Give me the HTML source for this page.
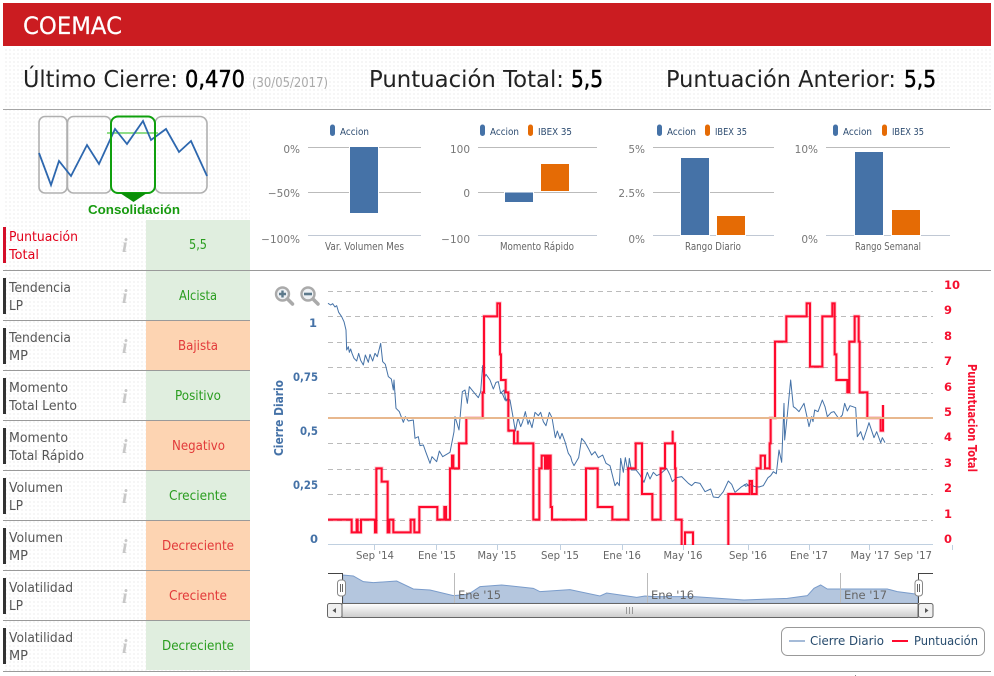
<!DOCTYPE html>
<html lang="es">
<head>
<meta charset="utf-8">
<title>COEMAC</title>
<style>
html,body{margin:0;padding:0;background:#fff;width:994px;height:676px;overflow:hidden}
svg{display:block}
text{font-family:"DejaVu Sans","Liberation Sans",sans-serif}
.h{font-size:23px;fill:#222}
.hb{font-size:23px;fill:#000;stroke:#000;stroke-width:.5px}
.l{font-size:13px;fill:#555}
.r{font-size:13px;fill:#e2001a}
.g{font-size:13px;fill:#2a9d1f}
.o{font-size:13px;fill:#e23a3a}
.i{font-family:"Liberation Serif",serif;font-style:italic;font-weight:bold;font-size:20px;fill:#c8c8c8}
.t{font-size:10.5px;fill:#666}
.y{font-size:10.5px;fill:#777;text-anchor:end}
.lg{font-size:9.5px;fill:#2b4a6f}
.ax{font-size:11px;fill:#666;text-anchor:middle}
.bl{font-size:11.5px;font-weight:bold;fill:#4572a7;text-anchor:end}
.br{font-size:11.5px;font-weight:bold;fill:#f5102f}
.nv{font-size:11.5px;fill:#666}
.lt{font-size:12px;fill:#274b6d}
</style>
</head>
<body>
<svg width="994" height="676" viewBox="0 0 994 676" xmlns="http://www.w3.org/2000/svg">
<defs>
<pattern id="d" width="4" height="4" patternUnits="userSpaceOnUse"><rect x="1" y="1" width="2" height="2" fill="#f6f6f6"/></pattern>
<clipPath id="pc"><rect x="328" y="280" width="610" height="265"/></clipPath>
<linearGradient id="sb" x1="0" y1="0" x2="0" y2="1"><stop offset="0" stop-color="#fff"/><stop offset="1" stop-color="#ccc"/></linearGradient>
<g id="red">
<path transform="translate(260,275) scale(.33333)" d="M204 734H275V772H290V734H293V772H303V734H345V772H349V580H365V620H383V772H388V734H400V772H452V734H463V772H478V696H532V734H553V696H558V734H570V580H576V542H580V580H597V505H619V429H668V352H672V124H712V85H720V238H723V315H737V352H745V467H750"/>
<path transform="translate(500,275) scale(.33333)" d="M25 467H42V505H53V467V505H100V734H118V580H125V542H135V580H140V542H145V580H150V542H152V696H156V734H258V580H293V696H337V734H385V580H407V505H426V657H457V734H482V580H495V505H518V467V505H525V580H527V734H545V820H555V772H579V820H685V657H732"/>
<path transform="translate(744,275) scale(.33333)" d="M0 657H17V618H24V657H38V580H50V542H63V580H77V505H80V429H93V200H127V124H188V85H198V275H235V124H265V85H272V124V238H277V315H310V352H316V200H332V124H344V200H347V352H370V429H410V467H417V390"/>
</g>
</defs>

<rect width="994" height="676" fill="#fff"/>
<rect x="3" y="47" width="988" height="62" fill="url(#d)"/>
<rect x="3" y="110" width="247" height="561" fill="url(#d)"/>

<!-- Header -->
<rect x="3" y="3" width="988" height="43" fill="#cb1c21"/>
<text x="23" y="34" font-size="24" fill="#fff" stroke="#fff" stroke-width=".2" textLength="99" lengthAdjust="spacingAndGlyphs">COEMAC</text>

<text class="h" x="23" y="87" textLength="155" lengthAdjust="spacingAndGlyphs">Último Cierre:</text>
<text class="hb" x="185" y="87" textLength="60" lengthAdjust="spacingAndGlyphs">0,470</text>
<text x="252" y="87" font-size="13" fill="#aaa" textLength="76" lengthAdjust="spacingAndGlyphs">(30/05/2017)</text>
<text class="h" x="369" y="87" textLength="195" lengthAdjust="spacingAndGlyphs">Puntuación Total:</text>
<text class="hb" x="571" y="87" textLength="32" lengthAdjust="spacingAndGlyphs">5,5</text>
<text class="h" x="666" y="87" textLength="230" lengthAdjust="spacingAndGlyphs">Puntuación Anterior:</text>
<text class="hb" x="904" y="87" textLength="32" lengthAdjust="spacingAndGlyphs">5,5</text>
<rect x="3" y="109" width="988" height="1" fill="#a5a5a5"/>

<!-- Pattern icon -->
<g fill="#fff" fill-opacity="0" stroke="#b0b0b0" stroke-width="1.600">
<rect x="39" y="116.500" width="28" height="76.500" rx="6"/>
<rect x="67.500" y="116.500" width="43.500" height="76.500" rx="6"/>
<rect x="155" y="116.500" width="52" height="76.500" rx="7"/>
</g>
<path d="M107 133H158" stroke="#8fdc87" stroke-width="2"/>
<polyline points="39,153 51,185 59,161 71,176 87,145 99,164 115,129 127,144 143,121 151,140 166,129 179,152 191,141 207,176" fill="none" stroke="#2d67ae" stroke-width="1.800"/>
<rect x="111" y="116.500" width="44" height="76.500" rx="7" fill="none" stroke="#10a00e" stroke-width="2"/>
<path d="M120 193H147L133.500 202Z" fill="#0a8f08"/>
<text x="88" y="214" font-weight="bold" font-size="13" fill="#179a0f" style="font-family:'Liberation Sans',sans-serif" textLength="92" lengthAdjust="spacingAndGlyphs">Consolidación</text>

<!-- Table -->
<rect x="146" y="220" width="104" height="50" fill="#e0eedf"/>
<rect x="146" y="271" width="104" height="49" fill="#e0eedf"/>
<rect x="146" y="321" width="104" height="49" fill="#fdd4b2"/>
<rect x="146" y="371" width="104" height="49" fill="#e0eedf"/>
<rect x="146" y="421" width="104" height="49" fill="#fdd4b2"/>
<rect x="146" y="471" width="104" height="49" fill="#e0eedf"/>
<rect x="146" y="521" width="104" height="49" fill="#fdd4b2"/>
<rect x="146" y="571" width="104" height="49" fill="#fdd4b2"/>
<rect x="146" y="621" width="104" height="49" fill="#e0eedf"/>

<g fill="#9a9a9a">
<rect x="3" y="270" width="988" height="1"/>
<rect x="3" y="320" width="247" height="1"/>
<rect x="3" y="370" width="247" height="1"/>
<rect x="3" y="420" width="247" height="1"/>
<rect x="3" y="470" width="247" height="1"/>
<rect x="3" y="520" width="247" height="1"/>
<rect x="3" y="570" width="247" height="1"/>
<rect x="3" y="620" width="247" height="1"/>
<rect x="3" y="671" width="988" height="1"/>
</g>
<rect x="855" y="675" width="1" height="1" fill="#888"/>

<rect x="3" y="227" width="3" height="36" fill="#d40f2a"/>
<g fill="#333">
<rect x="3" y="278" width="3" height="36"/>
<rect x="3" y="328" width="3" height="36"/>
<rect x="3" y="378" width="3" height="36"/>
<rect x="3" y="428" width="3" height="36"/>
<rect x="3" y="478" width="3" height="36"/>
<rect x="3" y="528" width="3" height="36"/>
<rect x="3" y="578" width="3" height="36"/>
<rect x="3" y="628" width="3" height="36"/>
</g>

<text class="r" x="9" y="241" textLength="69" lengthAdjust="spacingAndGlyphs">Puntuación</text>
<text class="r" x="9" y="259" textLength="30" lengthAdjust="spacingAndGlyphs">Total</text>
<text class="l" x="9" y="292" textLength="62" lengthAdjust="spacingAndGlyphs">Tendencia</text>
<text class="l" x="9" y="310" textLength="14" lengthAdjust="spacingAndGlyphs">LP</text>
<text class="l" x="9" y="342" textLength="62" lengthAdjust="spacingAndGlyphs">Tendencia</text>
<text class="l" x="9" y="360" textLength="19" lengthAdjust="spacingAndGlyphs">MP</text>
<text class="l" x="9" y="392" textLength="59" lengthAdjust="spacingAndGlyphs">Momento</text>
<text class="l" x="9" y="410" textLength="68" lengthAdjust="spacingAndGlyphs">Total Lento</text>
<text class="l" x="9" y="442" textLength="59" lengthAdjust="spacingAndGlyphs">Momento</text>
<text class="l" x="9" y="460" textLength="75" lengthAdjust="spacingAndGlyphs">Total Rápido</text>
<text class="l" x="9" y="492" textLength="54" lengthAdjust="spacingAndGlyphs">Volumen</text>
<text class="l" x="9" y="510" textLength="14" lengthAdjust="spacingAndGlyphs">LP</text>
<text class="l" x="9" y="542" textLength="54" lengthAdjust="spacingAndGlyphs">Volumen</text>
<text class="l" x="9" y="560" textLength="19" lengthAdjust="spacingAndGlyphs">MP</text>
<text class="l" x="9" y="592" textLength="64" lengthAdjust="spacingAndGlyphs">Volatilidad</text>
<text class="l" x="9" y="610" textLength="14" lengthAdjust="spacingAndGlyphs">LP</text>
<text class="l" x="9" y="642" textLength="64" lengthAdjust="spacingAndGlyphs">Volatilidad</text>
<text class="l" x="9" y="660" textLength="19" lengthAdjust="spacingAndGlyphs">MP</text>

<text class="i" x="122" y="252">i</text>
<text class="i" x="122" y="303">i</text>
<text class="i" x="122" y="353">i</text>
<text class="i" x="122" y="403">i</text>
<text class="i" x="122" y="453">i</text>
<text class="i" x="122" y="503">i</text>
<text class="i" x="122" y="553">i</text>
<text class="i" x="122" y="603">i</text>
<text class="i" x="122" y="653">i</text>

<text class="g" x="189" y="249" textLength="18" lengthAdjust="spacingAndGlyphs">5,5</text>
<text class="g" x="179" y="300" textLength="38" lengthAdjust="spacingAndGlyphs">Alcista</text>
<text class="o" x="178" y="350" textLength="40" lengthAdjust="spacingAndGlyphs">Bajista</text>
<text class="g" x="175" y="400" textLength="46" lengthAdjust="spacingAndGlyphs">Positivo</text>
<text class="o" x="172" y="450" textLength="53" lengthAdjust="spacingAndGlyphs">Negativo</text>
<text class="g" x="169" y="500" textLength="58" lengthAdjust="spacingAndGlyphs">Creciente</text>
<text class="o" x="162" y="550" textLength="72" lengthAdjust="spacingAndGlyphs">Decreciente</text>
<text class="o" x="169" y="600" textLength="58" lengthAdjust="spacingAndGlyphs">Creciente</text>
<text class="g" x="162" y="650" textLength="72" lengthAdjust="spacingAndGlyphs">Decreciente</text>

<!-- Small bar charts -->
<g stroke="#bbb" stroke-width="1">
<path d="M308 147.500H421M308 192.500H421"/>
<path d="M478 147.500H597M478 192.500H597"/>
<path d="M653 147.500H774M653 192.500H774"/>
<path d="M826 147.500H950"/>
</g>
<g stroke="#c0c8d4" stroke-width="1">
<path d="M308 235.500H421M478 235.500H597M653 235.500H774M826 235.500H950"/>
</g>
<g fill="#4572a7" stroke="#fff" stroke-width="1">
<rect x="349.500" y="146.500" width="29" height="67"/>
<rect x="504.500" y="192" width="29" height="10.500"/>
<rect x="680.500" y="157.500" width="29" height="78"/>
<rect x="854.500" y="151.500" width="29" height="84"/>
</g>
<g fill="#e56b05" stroke="#fff" stroke-width="1">
<rect x="540.500" y="163.500" width="29" height="28"/>
<rect x="716.500" y="215.500" width="29" height="20"/>
<rect x="891.500" y="209.500" width="29" height="26"/>
</g>

<g fill="#4572a7">
<rect x="330" y="124.500" width="5" height="11.500" rx="2.500"/>
<rect x="480" y="124.500" width="5" height="11.500" rx="2.500"/>
<rect x="657" y="124.500" width="5" height="11.500" rx="2.500"/>
<rect x="833" y="124.500" width="5" height="11.500" rx="2.500"/>
</g>
<g fill="#e56b05">
<rect x="528" y="124.500" width="5" height="11.500" rx="2.500"/>
<rect x="705" y="124.500" width="5" height="11.500" rx="2.500"/>
<rect x="882" y="124.500" width="5" height="11.500" rx="2.500"/>
</g>
<text class="lg" x="340" y="135" textLength="29" lengthAdjust="spacingAndGlyphs">Accion</text>
<text class="lg" x="490" y="135" textLength="29" lengthAdjust="spacingAndGlyphs">Accion</text>
<text class="lg" x="538" y="135" textLength="34" lengthAdjust="spacingAndGlyphs">IBEX 35</text>
<text class="lg" x="667" y="135" textLength="29" lengthAdjust="spacingAndGlyphs">Accion</text>
<text class="lg" x="715" y="135" textLength="32" lengthAdjust="spacingAndGlyphs">IBEX 35</text>
<text class="lg" x="843" y="135" textLength="29" lengthAdjust="spacingAndGlyphs">Accion</text>
<text class="lg" x="892" y="135" textLength="32" lengthAdjust="spacingAndGlyphs">IBEX 35</text>

<text class="y" x="300" y="153">0%</text>
<text class="y" x="300" y="197">−50%</text>
<text class="y" x="300" y="243">−100%</text>
<text class="y" x="470" y="153">100</text>
<text class="y" x="470" y="197">0</text>
<text class="y" x="470" y="243">−100</text>
<text class="y" x="645" y="153">5%</text>
<text class="y" x="645" y="197">2.5%</text>
<text class="y" x="645" y="243">0%</text>
<text class="y" x="818" y="153">10%</text>
<text class="y" x="818" y="243">0%</text>

<text class="t" x="325" y="250" textLength="79" lengthAdjust="spacingAndGlyphs">Var. Volumen Mes</text>
<text class="t" x="500" y="250" textLength="74" lengthAdjust="spacingAndGlyphs">Momento Rápido</text>
<text class="t" x="685" y="250" textLength="56" lengthAdjust="spacingAndGlyphs">Rango Diario</text>
<text class="t" x="855" y="250" textLength="66" lengthAdjust="spacingAndGlyphs">Rango Semanal</text>

<!-- Zoom icons -->
<g fill="none">
<path d="M288 299.500L292.500 304" stroke="#aaa" stroke-width="3.500" stroke-linecap="round"/>
<circle cx="282.500" cy="294" r="6.500" fill="#eef1f4" stroke="#aaa" stroke-width="2.400"/>
<path d="M279 294H286M282.500 290.500V297.500" stroke="#5d7a8c" stroke-width="2.400"/>
<path d="M313.500 299.500L318 304" stroke="#aaa" stroke-width="3.500" stroke-linecap="round"/>
<circle cx="308" cy="294" r="6.500" fill="#eef1f4" stroke="#aaa" stroke-width="2.400"/>
<path d="M304 294H312" stroke="#5d7a8c" stroke-width="2.600"/>
</g>

<!-- Main chart grid -->
<path d="M328 291.500H933M328 316.500H933M328 342.500H933M328 367.500H933M328 393.500H933M328 443.500H933M328 469.500H933M328 494.500H933M328 520.500H933" stroke="#bbb" stroke-width="1" stroke-dasharray="5 4" fill="none"/>
<path d="M328 544.500H933" stroke="#c0d0e0" stroke-width="1"/>
<path d="M374.500 545V550M436.500 545V550M497.500 545V550M560.500 545V550M622.500 545V550M683.500 545V550M748.500 545V550M809.500 545V550M869.500 545V550M952.500 545V550" stroke="#c0d0e0" stroke-width="1"/>

<!-- Blue series -->
<g fill="none" stroke="#4572a7" stroke-width="3" stroke-linejoin="round">
<polyline transform="translate(260,275) scale(.33333)" points="204,85 212,90 218,86 225,96 230,92 236,112 245,125 252,140 258,165 260,225 265,215 268,232 272,222 276,235 282,250 290,258 296,235 302,256 310,270 316,240 325,262 330,238 338,258 345,235 352,245 362,205 368,260 376,268 385,305 394,312 400,345 402,315 408,400 418,410 430,442 436,425 445,438 460,435 465,490 475,485 480,512 490,510 497,530 510,565 516,545 530,560 538,528 548,545 570,532 582,470 585,425 597,465 607,350 615,345 622,385 628,335 640,350 655,368 662,350 668,272 672,310 678,298 690,315 700,342 708,322 715,320 722,355 732,345 738,378 745,372 750,375"/>
<polyline transform="translate(500,275) scale(.33333)" points="0,350 8,358 15,375 22,372 30,375 38,420 46,468 54,428 62,455 68,440 76,410 84,448 88,435 96,458 105,412 115,422 122,412 130,440 138,452 148,412 156,428 166,488 172,468 180,492 186,475 195,500 205,535 212,545 216,560 222,572 236,548 245,490 255,502 265,520 275,540 285,530 295,548 308,540 318,565 330,572 345,632 352,622 358,632 362,550 370,592 376,548 384,590 388,550 394,585 408,585 420,600 432,622 442,592 450,612 460,592 470,602 482,596 500,580 510,600 517,620 530,608 545,605 565,625 575,632 585,622 600,625 615,650 632,642 640,666 655,668 670,650 685,618 695,628 705,652 725,635 740,626 750,637"/>
<polyline transform="translate(744,275) scale(.33333)" points="0,628 5,634 20,628 30,634 45,636 58,632 65,620 72,608 80,602 88,590 97,596 105,525 113,562 120,385 122,495 130,420 140,315 148,395 155,400 165,410 180,385 190,430 195,455 203,425 207,440 212,405 222,410 235,375 243,395 250,425 262,412 270,410 285,432 295,420 302,385 310,408 318,392 335,398 340,485 350,470 358,495 368,465 375,443 390,488 398,470 410,503 415,488 423,503"/>
</g>

<!-- Red series -->
<g clip-path="url(#pc)" fill="none">
<use href="#red" stroke="#ff0a2d" stroke-opacity=".22" stroke-width="11"/>
<use href="#red" stroke="#ff0a2d" stroke-width="6"/>
</g>

<!-- Plot line -->
<rect x="328" y="417" width="605" height="2" fill="#e8b88e"/>

<!-- Axis labels -->
<text class="bl" x="317" y="327">1</text>
<text class="bl" x="318" y="381" textLength="25" lengthAdjust="spacingAndGlyphs">0,75</text>
<text class="bl" x="318" y="435" textLength="18" lengthAdjust="spacingAndGlyphs">0,5</text>
<text class="bl" x="318" y="489" textLength="25" lengthAdjust="spacingAndGlyphs">0,25</text>
<text class="bl" x="318" y="543">0</text>
<text class="br" x="944" y="289">10</text>
<text class="br" x="944" y="314">9</text>
<text class="br" x="944" y="340">8</text>
<text class="br" x="944" y="365">7</text>
<text class="br" x="944" y="391">6</text>
<text class="br" x="944" y="416">5</text>
<text class="br" x="944" y="441">4</text>
<text class="br" x="944" y="467">3</text>
<text class="br" x="944" y="492">2</text>
<text class="br" x="944" y="518">1</text>
<text class="br" x="944" y="543">0</text>

<text transform="translate(283,456) rotate(-90)" font-size="12" font-weight="bold" fill="#4572a7" textLength="76" lengthAdjust="spacingAndGlyphs">Cierre Diario</text>
<text transform="translate(968,364) rotate(90)" font-size="12" font-weight="bold" fill="#f5102f" textLength="108" lengthAdjust="spacingAndGlyphs">Pununtuacion Total</text>

<text class="ax" x="375" y="559" textLength="38" lengthAdjust="spacingAndGlyphs">Sep '14</text>
<text class="ax" x="437" y="559" textLength="38" lengthAdjust="spacingAndGlyphs">Ene '15</text>
<text class="ax" x="497" y="559" textLength="39" lengthAdjust="spacingAndGlyphs">May '15</text>
<text class="ax" x="560" y="559" textLength="38" lengthAdjust="spacingAndGlyphs">Sep '15</text>
<text class="ax" x="622" y="559" textLength="38" lengthAdjust="spacingAndGlyphs">Ene '16</text>
<text class="ax" x="683" y="559" textLength="39" lengthAdjust="spacingAndGlyphs">May '16</text>
<text class="ax" x="748" y="559" textLength="38" lengthAdjust="spacingAndGlyphs">Sep '16</text>
<text class="ax" x="809" y="559" textLength="38" lengthAdjust="spacingAndGlyphs">Ene '17</text>
<text class="ax" x="870" y="559" textLength="39" lengthAdjust="spacingAndGlyphs">May '17</text>
<text class="ax" x="913" y="559" textLength="38" lengthAdjust="spacingAndGlyphs">Sep '17</text>

<!-- Navigator -->
<path transform="translate(320,565) scale(.33333)" d="M68 30L100 33L130 50L160 53L230 48L280 72L330 75L400 92L445 88L460 78L480 65L545 60L640 70L660 80L750 74L840 93L860 84L950 97L975 93L1002 95L1122 95L1272 105L1402 100L1462 92L1482 70L1502 60L1522 72L1562 72L1702 72L1732 80L1794 88V115H68Z" fill="#b4c6de" stroke="#7a9ccb" stroke-width="3"/>
<path d="M454.500 573V603M647.500 573V603M840.500 573V603" stroke="#bbb" stroke-width="1"/>
<text class="nv" x="458" y="599">Ene '15</text>
<text class="nv" x="651" y="599">Ene '16</text>
<text class="nv" x="844" y="599">Ene '17</text>
<path d="M328 573.500H342.500V603M933 573.500H918.500V603" fill="none" stroke="#444" stroke-width="1"/>
<rect x="337.500" y="580" width="8" height="16" rx="3" fill="#fff" stroke="#888"/>
<path d="M340.500 584V592M342.500 584V592" stroke="#666"/>
<rect x="915" y="580" width="7.500" height="16" rx="3" fill="#fff" stroke="#888"/>
<path d="M917.500 584V592M919.500 584V592" stroke="#666"/>

<rect x="342" y="603.500" width="576" height="14" fill="url(#sb)" stroke="#666" stroke-width="1"/>
<rect x="327.500" y="603.500" width="14.500" height="14" rx="2" fill="#f0f0f0" stroke="#666"/>
<rect x="918.500" y="603.500" width="14.500" height="14" rx="2" fill="#f0f0f0" stroke="#666"/>
<path d="M336 608L332.500 610.500L336 613Z" fill="#555"/>
<path d="M925 608L928.500 610.500L925 613Z" fill="#555"/>
<path d="M626.500 607V614M629.500 607V614M632.500 607V614" stroke="#999" stroke-width="1"/>

<!-- Legend -->
<rect x="781.500" y="627.500" width="203" height="28" rx="6" fill="#fff" stroke="#999"/>
<rect x="789" y="640" width="16" height="2" fill="#a5bbd8"/>
<text class="lt" x="810" y="645" textLength="74" lengthAdjust="spacingAndGlyphs">Cierre Diario</text>
<rect x="892" y="640" width="16" height="2" fill="#ff0a2d"/>
<text class="lt" x="914" y="645" textLength="64" lengthAdjust="spacingAndGlyphs">Puntuación</text>
</svg>
</body>
</html>
